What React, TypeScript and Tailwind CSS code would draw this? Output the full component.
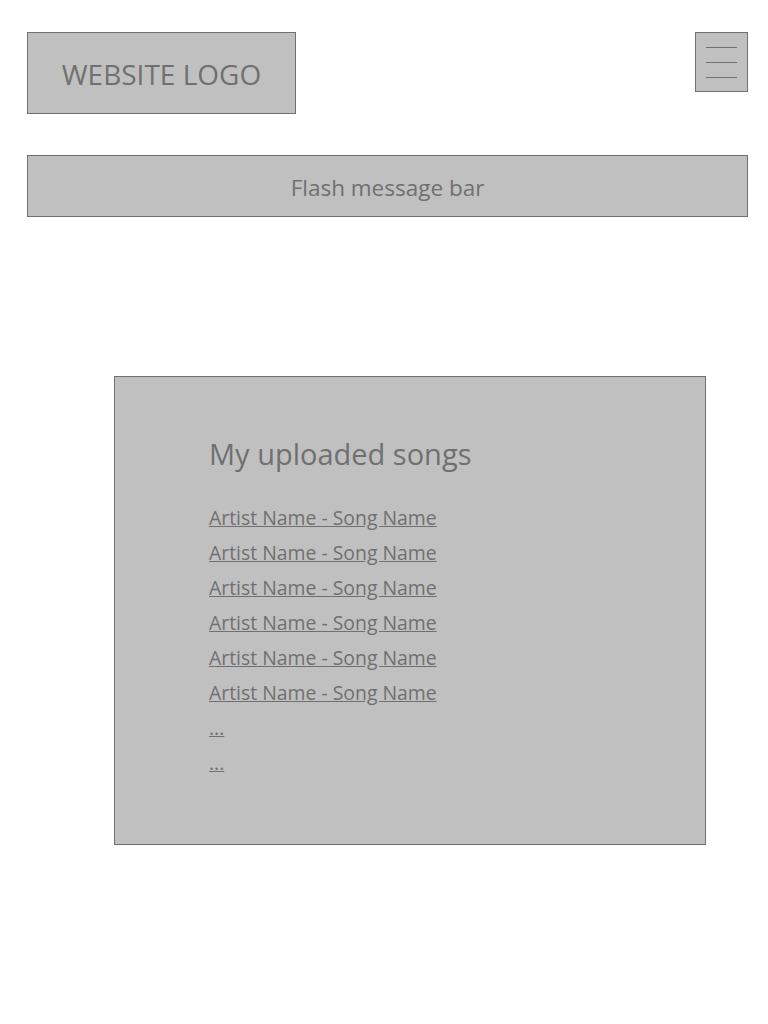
export default function App() {
  const songs = Array.from({ length: 6 }, () => 'Artist Name - Song Name')

  return (
    <div className="min-h-[1024px] bg-white pt-8 font-['Open_Sans',sans-serif] text-[#707070]">
      {/* header */}
      <div className="ml-[27px] mr-[20px] flex items-start justify-between">
        <div className="flex h-[82px] w-[269px] items-center justify-center border border-[#707070] bg-[#c0c0c0] pt-[2px] text-[28px]">
          WEBSITE LOGO
        </div>
        <button className="flex h-[60px] w-[53px] flex-col items-center justify-center gap-[14px] border border-[#707070] bg-[#c0c0c0]">
          <span className="block h-px w-[31px] bg-[#707070]" />
          <span className="block h-px w-[31px] bg-[#707070]" />
          <span className="block h-px w-[31px] bg-[#707070]" />
        </button>
      </div>

      {/* flash message */}
      <div className="ml-[27px] mr-[20px] mt-[41px] flex h-[62px] items-center justify-center border border-[#707070] bg-[#c0c0c0] pt-[3px] text-[22.5px]">
        Flash message bar
      </div>

      {/* songs panel */}
      <div className="ml-[114px] mr-[62px] mt-[159px] h-[469px] border border-[#707070] bg-[#c0c0c0] pl-[94px] pt-[57px]">
        <h2 className="text-[29px] leading-[40px]">My uploaded songs</h2>
        <ul className="mt-[26px]">
          {songs.map((s, i) => (
            <li key={i} className="text-[19.4px] leading-[35px]">
              <a href="#" className="underline">{s}</a>
            </li>
          ))}
          <li className="text-[19.4px] leading-[35px]"><a href="#" className="underline">...</a></li>
          <li className="text-[19.4px] leading-[35px]"><a href="#" className="underline">...</a></li>
        </ul>
      </div>
    </div>
  )
}
